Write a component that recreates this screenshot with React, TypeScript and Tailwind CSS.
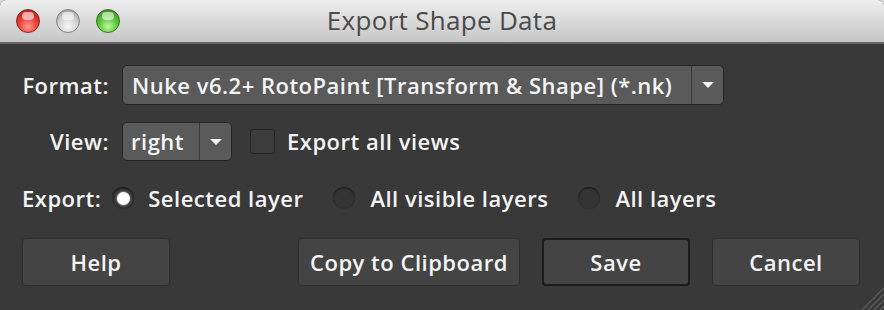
import React from "react";

const font = { fontFamily: '"Open Sans", "Liberation Sans", sans-serif' };

function Light({ color }: { color: "red" | "gray" | "green" }) {
  const fills = {
    red: "bg-[radial-gradient(circle_at_50%_75%,#ff9a90_0%,#f0413a_45%,#a8100a_100%)] border-[#8a2622]",
    gray: "bg-[radial-gradient(circle_at_50%_75%,#f8f8f8_0%,#cfcfcf_50%,#8a8a8a_100%)] border-[#858585]",
    green: "bg-[radial-gradient(circle_at_50%_75%,#c0f7a5_0%,#5fc83a_45%,#287514_100%)] border-[#3a7328]",
  };
  return (
    <div className={`relative h-[24px] w-[24px] rounded-full border ${fills[color]}`}>
      <div className="absolute left-[5px] top-[2px] h-[8px] w-[12px] rounded-full bg-white/60" />
    </div>
  );
}

function Arrow() {
  return (
    <svg width="14" height="8" viewBox="0 0 14 8">
      <path d="M1 1 L13 1 L7 7 Z" fill="#f2f2f2" />
    </svg>
  );
}

function Radio({ on }: { on?: boolean }) {
  return (
    <div className="flex h-[22px] w-[22px] items-center justify-center rounded-full bg-[#343434] shadow-[inset_0_1px_2px_rgba(0,0,0,0.6)]">
      {on && <div className="h-[13px] w-[13px] rounded-full bg-white shadow-[0_0_3px_rgba(255,255,255,0.7)]" />}
    </div>
  );
}

function Btn({ label, width, primary }: { label: string; width: string; primary?: boolean }) {
  return (
    <div
      className={`flex h-[48px] ${width} items-center justify-center rounded-[4px] bg-[#444444] ${
        primary ? "border-2 border-[#1c1c1c]" : "border border-[#2e2e2e]"
      }`}
    >
      {label}
    </div>
  );
}

export default function App() {
  return (
    <div className="h-[310px] w-[884px] overflow-hidden bg-[#d8d8d8]" style={font}>
      <div className="relative flex h-[310px] flex-col overflow-hidden rounded-t-[6px] bg-[#393939]">
        <div className="relative flex h-[44px] items-center border-b-2 border-[#686868] bg-gradient-to-b from-[#eeeeee] to-[#c6c6c6]">
          <div className="flex gap-[16px] pl-[16px]">
            <Light color="red" />
            <Light color="gray" />
            <Light color="green" />
          </div>
          <div className="absolute inset-x-0 top-[3px] text-center text-[26px] leading-[34px] tracking-[0.3px] text-[#4a4a4a]">
            Export Shape Data
          </div>
        </div>

        <div className="flex flex-col pl-[22px] pt-[21px] text-[22px] font-semibold tracking-[0.5px] text-[#f4f4f4]">
          <div className="flex h-[40px] items-center">
            <div className="w-[87px] text-right">Format:</div>
            <div className="ml-[13px] flex h-[40px] w-[602px] overflow-hidden rounded-[5px] border border-[#262626] bg-[#5a5a5a]">
              <div className="flex flex-1 items-center pl-[9px]">
                Nuke v6.2+ RotoPaint [Transform &amp; Shape] (*.nk)
              </div>
              <div className="flex w-[32px] items-center justify-center border-l border-[#3a3a3a]">
                <Arrow />
              </div>
            </div>
          </div>

          <div className="mt-[17px] flex h-[39px] items-center">
            <div className="w-[87px] text-right">View:</div>
            <div className="ml-[13px] flex h-[39px] w-[110px] overflow-hidden rounded-[5px] border border-[#262626] bg-[#5a5a5a]">
              <div className="flex flex-1 items-center pl-[8px]">right</div>
              <div className="flex w-[32px] items-center justify-center border-l border-[#3a3a3a]">
                <Arrow />
              </div>
            </div>
            <div className="ml-[18px] h-[25px] w-[25px] rounded-[3px] border border-[#262626] bg-[#3c3c3c]" />
            <div className="ml-[12px]">Export all views</div>
          </div>

          <div className="mt-[25px] flex h-[24px] items-center">
            <div>Export:</div>
            <div className="ml-[11px]"><Radio on /></div>
            <div className="ml-[14px]">Selected layer</div>
            <div className="ml-[30px]"><Radio /></div>
            <div className="ml-[15px]">All visible layers</div>
            <div className="ml-[30px]"><Radio /></div>
            <div className="ml-[15px]">All layers</div>
          </div>

          <div className="mt-[28px] flex items-center">
            <Btn label="Help" width="w-[148px]" />
            <div className="ml-[128px]"><Btn label="Copy to Clipboard" width="w-[222px]" /></div>
            <div className="ml-[22px]"><Btn label="Save" width="w-[148px]" primary /></div>
            <div className="ml-[22px]"><Btn label="Cancel" width="w-[148px]" /></div>
          </div>
        </div>

        <svg className="absolute bottom-0 right-0" width="28" height="28" viewBox="0 0 28 28">
          <path d="M6 28 L28 6 M12 28 L28 12 M18 28 L28 18 M24 28 L28 24" stroke="#5a5a5a" strokeWidth="1.5" />
        </svg>
      </div>
    </div>
  );
}
